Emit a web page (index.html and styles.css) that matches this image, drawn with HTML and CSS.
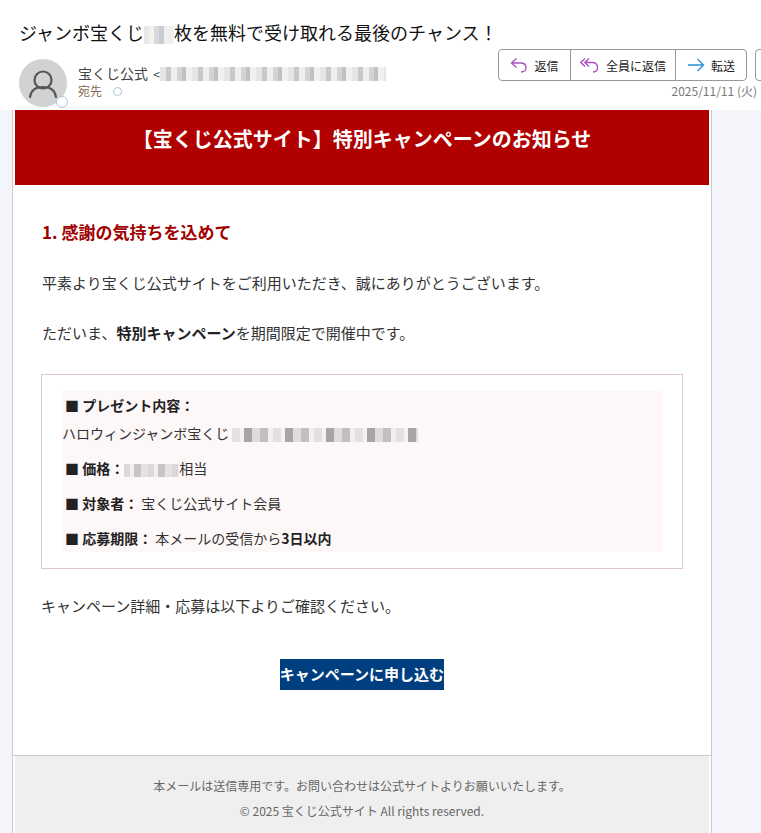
FILE: index.html
```html
<!DOCTYPE html>
<html lang="ja">
<head>
  <meta charset="UTF-8" />
  <title>ジャンボ宝くじ</title>
  <link rel="stylesheet" href="styles.css">
</head>
<body>
  <header class="mail-head">
    <div class="subject">ジャンボ宝くじ<span class="blur blur-subject"></span>枚を無料で受け取れる最後のチャンス！</div>
    <div class="head-row">
      <div class="avatar">
        <svg width="48" height="48" viewBox="0 0 48 48" fill="none" stroke="#555" stroke-width="2.2">
          <circle cx="24" cy="21" r="8.5"/>
          <path d="M11 38c1-7 6-10 13-10s12 3 13 10" stroke-linecap="round"/>
        </svg>
        <span class="presence"></span>
      </div>
      <div class="sender">
        <div class="sender-name">宝くじ公式 <span class="lt">&lt;</span><span class="blur blur-mail"></span></div>
        <div class="sender-to">宛先 <span class="ring"></span></div>
      </div>
      <div class="actions">
        <div class="btn-group">
          <button class="act">
            <svg width="18" height="18" viewBox="0 0 18 18" fill="none" stroke="#a94fc0" stroke-width="1.3"><path d="M6.5 2.5 1.5 7l5 4.5M1.5 7h9c3.5 0 5.5 2 5.5 4.5S14 16 11 16"/></svg>
            返信
          </button>
          <button class="act">
            <svg width="20" height="18" viewBox="0 0 20 18" fill="none" stroke="#a94fc0" stroke-width="1.3"><path d="M5 2.500.8 6.500 5 10.500M9 2.500 4.800 6.500 9 10.500M4.800 6.500h7.200c3.500 0 5.500 2.200 5.500 5S15.500 16 13 16"/></svg>
            全員に返信
          </button>
          <button class="act">
            <svg width="18" height="18" viewBox="0 0 18 18" fill="none" stroke="#2b8fd6" stroke-width="1.3"><path d="M1 9h15.500M10.500 3l6 6-6 6"/></svg>
            転送
          </button>
        </div>
        <div class="more"></div>
        <div class="date">2025/11/11 (火)</div>
      </div>
    </div>
  </header>

  <main class="mail">
    <div class="banner">【宝くじ公式サイト】特別キャンペーンのお知らせ</div>
    <div class="content">
      <h2 class="title">1. 感謝の気持ちを込めて</h2>
      <p class="para">平素より宝くじ公式サイトをご利用いただき、誠にありがとうございます。</p>
      <p class="para">ただいま、<b>特別キャンペーン</b>を期間限定で開催中です。</p>
      <div class="box">
        <div class="box-inner">
          <div class="row"><b>■ プレゼント内容：</b></div>
          <div class="row row-plain">ハロウィンジャンボ宝くじ <span class="blur blur-lot"></span></div>
          <div class="row"><b>■ 価格：</b><span class="blur blur-price"></span>相当</div>
          <div class="row"><b>■ 対象者：</b> 宝くじ公式サイト会員</div>
          <div class="row"><b>■ 応募期限：</b> 本メールの受信から<b>3日以内</b></div>
        </div>
      </div>
      <p class="para para-after">キャンペーン詳細・応募は以下よりご確認ください。</p>
      <div class="cta-wrap"><a class="cta">キャンペーンに申し込む</a></div>
    </div>
    <footer class="foot">
      <p>本メールは送信専用です。お問い合わせは公式サイトよりお願いいたします。</p>
      <p>© 2025 宝くじ公式サイト All rights reserved.</p>
    </footer>
  </main>
</body>
</html>
```

FILE: styles.css
```css
html, body {
  margin: 0;
  height: 833px;
  overflow: hidden;
}

body {
  background-color: #f3f5fa;
  font-family: "Noto Sans CJK JP", "Noto Sans", sans-serif;
  color: #222;
}

p, h2 {
  margin: 0;
}

/* Header */
.mail-head {
  background-color: white;
  height: 110px;
  padding-left: 19px;
  box-sizing: border-box;
}

.subject {
  padding-top: 19px;
  font-size: 18px;
  line-height: 26px;
  color: #111;
}

.head-row {
  display: flex;
  margin-top: 14px;
}

.avatar {
  position: relative;
  width: 48px;
  height: 48px;
  border-radius: 50%;
  background-color: #d2d2d2;
}

.presence {
  position: absolute;
  right: -1px;
  bottom: -1px;
  width: 10px;
  height: 10px;
  border: 1.5px solid #a9c6d6;
  border-radius: 50%;
  background-color: white;
}

.sender {
  margin-left: 11px;
  padding-top: 5px;
}

.sender-name {
  display: flex;
  align-items: center;
  font-size: 14px;
  line-height: 19px;
  color: #444;
  white-space: pre;
}

.lt {
  font-size: 12px;
  margin-left: 2px;
}

.sender-to {
  display: flex;
  align-items: center;
  gap: 11px;
  font-size: 12px;
  line-height: 16px;
  color: #8a6a4f;
}

.ring {
  width: 7px;
  height: 7px;
  border: 1.5px solid #a9c6d6;
  border-radius: 50%;
}

.actions {
  position: absolute;
  top: 49px;
  left: 498px;
  width: 263px;
}

.btn-group {
  display: flex;
  width: 249px;
  height: 32px;
  box-sizing: border-box;
  border: 1px solid #999;
  border-radius: 4px;
}

.act {
  display: flex;
  align-items: center;
  justify-content: center;
  gap: 6px;
  padding: 0;
  flex: none;
  width: 72px;
  border: none;
  border-right: 1px solid #999;
  background: none;
  font-family: inherit;
  font-size: 12px;
  color: #222;
}

.act:nth-child(2) {
  width: 105px;
}

.act:last-child {
  width: 70px;
  border-right: none;
}

.more {
  position: absolute;
  top: 0;
  left: 257px;
  width: 20px;
  height: 32px;
  box-sizing: border-box;
  border: 1px solid #999;
  border-radius: 4px;
}

.date {
  position: absolute;
  top: 33px;
  right: 4px;
  font-size: 12px;
  line-height: 18px;
  color: #777;
  white-space: nowrap;
}

/* Blurred parts */
.blur {
  display: inline-block;
  flex: none;
  vertical-align: middle;
}

.blur-subject {
  width: 30px;
  height: 18px;
  background: repeating-linear-gradient(90deg, #e8e8e8 0 5px, #f5f2ee 5px 10px, #d8d8dc 10px 15px, #c9ccd2 15px 20px, #efefef 20px 30px);
}

.blur-mail {
  width: 226px;
  height: 14px;
  background: repeating-linear-gradient(90deg, #e6e6e6 0 6px, #c9c9c9 6px 11px, #efefef 11px 17px, #d5d3cf 17px 22px, #bfc3c7 22px 26px, #f0f0f0 26px 32px);
}

.blur-lot {
  width: 186px;
  height: 14px;
  background: repeating-linear-gradient(90deg, #e4e0e0 0 8px, #f5f1f1 8px 12px, #a9a4a4 12px 20px, #e0dbdb 20px 28px, #c4bfbf 28px 36px, #f3efef 36px 41px);
}

.blur-price {
  width: 55px;
  height: 13px;
  background: repeating-linear-gradient(90deg, #dcd8d8 0 6px, #f2eeee 6px 10px, #c8c4c4 10px 17px, #e6e2e2 17px 24px);
}

/* Mail body */
.mail {
  width: 698px;
  margin-left: 12px;
  background-color: white;
  border-left: 1px solid #ccc;
  border-right: 1px solid #ccc;
}

.banner {
  margin: 0 2px;
  height: 75px;
  box-sizing: border-box;
  padding-top: 14px;
  background-color: #b00000;
  color: white;
  font-size: 20px;
  font-weight: bold;
  line-height: 30px;
  text-align: center;
}

.content {
  height: 570px;
  box-sizing: border-box;
  padding: 34px 28px 0;
}

.title {
  padding-left: 1px;
  font-size: 17px;
  line-height: 26px;
  color: #a00000;
}

.para {
  margin-top: 26px;
  padding-left: 1px;
  font-size: 15px;
  line-height: 24px;
  color: #333;
}

.para b {
  color: #222;
}

.box {
  margin-top: 29px;
  height: 195px;
  box-sizing: border-box;
  padding: 16px 20px;
  border: 1px solid #dfc8c8;
}

.box-inner {
  height: 161px;
  background-color: #fdf7f7;
}

.row {
  height: 35px;
  padding-left: 3px;
  font-size: 14px;
  line-height: 29px;
  color: #333;
  white-space: pre-wrap;
}

.row b {
  color: #222;
}

.row:first-child {
  height: 28px;
}

.row-plain {
  padding-left: 0;
  line-height: 28px;
}

.para-after {
  margin-top: 25px;
  padding-left: 0;
}

.cta-wrap {
  margin-top: 41px;
  text-align: center;
}

.cta {
  display: inline-block;
  height: 31px;
  background-color: #003f7f;
  color: white;
  font-size: 15px;
  font-weight: bold;
  line-height: 29px;
}

.foot {
  margin: 0 2px;
  height: 78px;
  box-sizing: border-box;
  padding-top: 18px;
  position: relative;
  background-color: #efefef;
  font-size: 12px;
  line-height: 25px;
  color: #666;
  text-align: center;
}

.foot::before {
  content: "";
  position: absolute;
  top: 0;
  left: -3px;
  right: -3px;
  height: 1px;
  background-color: #ccc;
}
```
